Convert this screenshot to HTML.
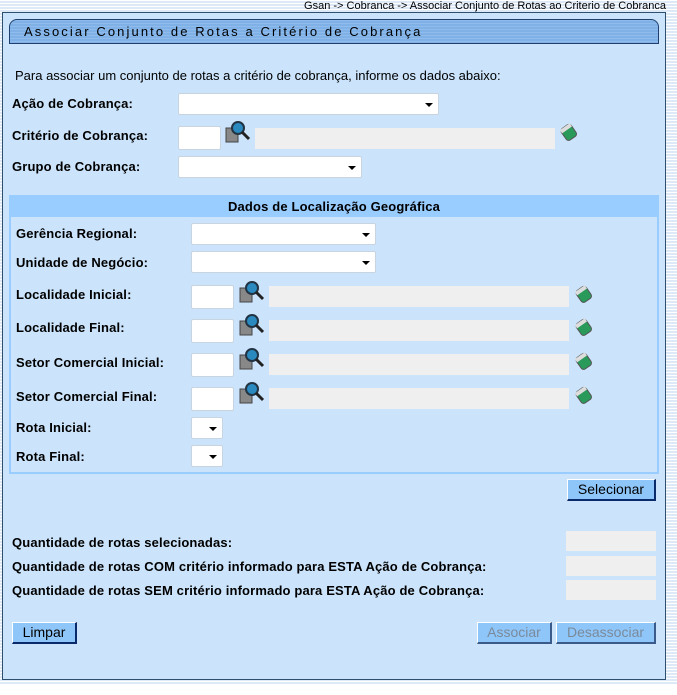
<!DOCTYPE html><html><head><meta charset="utf-8"><style>
*{margin:0;padding:0;box-sizing:border-box}
body{width:677px;height:695px;position:relative;overflow:hidden;background:#fff;font-family:"Liberation Sans",Arial,sans-serif;font-size:13px;color:#000}
.stripes{position:absolute;left:0;top:0;width:677px;height:684px;background:repeating-linear-gradient(#fff 0 1px,#dde9f7 1px 3px)}
.a{position:absolute}
.panel{position:absolute;left:2px;top:12px;width:664px;height:668px;background:#cbe4fb;border:1px solid #2f4f6f}
.title{position:absolute;left:9px;top:19px;width:650px;height:25px;border:1px solid #1f3f6f;border-radius:8px 8px 0 0;background:repeating-linear-gradient(#8fbcec 0 1px,#7fb1e6 1px 3px);font-size:13px;letter-spacing:2.1px;padding:4px 0 0 14px;color:#000}
.lb{position:absolute;font-weight:bold;font-size:13px;letter-spacing:0.15px}
.sel{position:absolute;background:#fff;border:1px solid #c8d4e0;border-radius:2px;height:22px}
.sel:after{content:"";position:absolute;right:5px;top:9px;border-left:4px solid transparent;border-right:4px solid transparent;border-top:4px solid #000}
.in{position:absolute;background:#fff;border:1px solid #c8d4e0;border-radius:2px;width:43px;height:24px}
.ro{position:absolute;background:#efefef;height:21px}
.btn{position:absolute;height:22px;background:#8fc6fa;border:1px solid #fff;border-right:2px solid #0a2a6a;border-bottom:2px solid #0a2a6a;font-size:14px;text-align:center;line-height:19px}
.dis{color:#7a8a9a;border-right:2px solid #3a5a8a;border-bottom:2px solid #3a5a8a}
</style></head><body>
<div class="stripes"></div>
<div class="a" style="right:11px;top:0;font-size:11px;line-height:12px">Gsan -&gt; Cobranca -&gt; Associar Conjunto de Rotas ao Criterio de Cobranca</div>
<div class="panel"></div>
<div class="title">Associar Conjunto de Rotas a Critério de Cobrança</div>
<div class="a" style="left:15px;top:68px">Para associar um conjunto de rotas a critério de cobrança, informe os dados abaixo:</div>

<div class="lb" style="left:12px;top:96px">Ação de Cobrança:</div>
<div class="sel" style="left:178px;top:93px;width:261px"></div>
<div class="lb" style="left:12px;top:128px">Critério de Cobrança:</div>
<div class="in" style="left:178px;top:126px"></div>
<svg class="a" style="left:225px;top:120px" width="28" height="26" viewBox="0 0 28 26"><rect x="1" y="8" width="12" height="14" fill="#888" stroke="#444"/><circle cx="13" cy="8" r="6" fill="#2a8ac0" stroke="#234" stroke-width="2"/><line x1="17" y1="12" x2="24" y2="19" stroke="#222" stroke-width="3"/></svg>
<div class="ro" style="left:255px;top:128px;width:300px"></div>
<svg class="a" style="left:558px;top:120px" width="22" height="22" viewBox="0 0 22 22"><g transform="rotate(-35 11 11)"><rect x="4" y="5" width="12" height="14" rx="3" fill="#2a9a5a" stroke="#555"/><rect x="4" y="5" width="12" height="4" fill="#ddd"/></g></svg>

<div class="lb" style="left:12px;top:159px">Grupo de Cobrança:</div>
<div class="sel" style="left:178px;top:156px;width:184px"></div>

<div class="a" style="left:9px;top:195px;width:650px;height:279px;border:2px solid #99ccff"></div>
<div class="a" style="left:11px;top:197px;width:646px;height:20px;background:#99ccff;font-weight:bold;text-align:center;line-height:20px;letter-spacing:0.15px">Dados de Localização Geográfica</div>

<div class="lb" style="left:16px;top:226px">Gerência Regional:</div>
<div class="sel" style="left:191px;top:223px;width:185px"></div>
<div class="lb" style="left:16px;top:255px">Unidade de Negócio:</div>
<div class="sel" style="left:191px;top:251px;width:185px"></div>

<div class="lb" style="left:16px;top:287px">Localidade Inicial:</div>
<div class="lb" style="left:16px;top:320px">Localidade Final:</div>
<div class="lb" style="left:16px;top:355px">Setor Comercial Inicial:</div>
<div class="lb" style="left:16px;top:389px">Setor Comercial Final:</div>

<div class="in" style="left:191px;top:285px"></div>
<div class="in" style="left:191px;top:319px"></div>
<div class="in" style="left:191px;top:353px"></div>
<div class="in" style="left:191px;top:387px"></div>
<div class="ro" style="left:269px;top:286px;width:300px"></div>
<div class="ro" style="left:269px;top:320px;width:300px"></div>
<div class="ro" style="left:269px;top:354px;width:300px"></div>
<div class="ro" style="left:269px;top:388px;width:300px"></div>
<svg class="a" style="left:239px;top:280px" width="28" height="26" viewBox="0 0 28 26"><rect x="1" y="8" width="12" height="14" fill="#888" stroke="#444"/><circle cx="13" cy="8" r="6" fill="#2a8ac0" stroke="#234" stroke-width="2"/><line x1="17" y1="12" x2="24" y2="19" stroke="#222" stroke-width="3"/></svg>
<svg class="a" style="left:239px;top:313px" width="28" height="26" viewBox="0 0 28 26"><rect x="1" y="8" width="12" height="14" fill="#888" stroke="#444"/><circle cx="13" cy="8" r="6" fill="#2a8ac0" stroke="#234" stroke-width="2"/><line x1="17" y1="12" x2="24" y2="19" stroke="#222" stroke-width="3"/></svg>
<svg class="a" style="left:239px;top:347px" width="28" height="26" viewBox="0 0 28 26"><rect x="1" y="8" width="12" height="14" fill="#888" stroke="#444"/><circle cx="13" cy="8" r="6" fill="#2a8ac0" stroke="#234" stroke-width="2"/><line x1="17" y1="12" x2="24" y2="19" stroke="#222" stroke-width="3"/></svg>
<svg class="a" style="left:239px;top:381px" width="28" height="26" viewBox="0 0 28 26"><rect x="1" y="8" width="12" height="14" fill="#888" stroke="#444"/><circle cx="13" cy="8" r="6" fill="#2a8ac0" stroke="#234" stroke-width="2"/><line x1="17" y1="12" x2="24" y2="19" stroke="#222" stroke-width="3"/></svg>
<svg class="a" style="left:573px;top:282px" width="22" height="22" viewBox="0 0 22 22"><g transform="rotate(-35 11 11)"><rect x="4" y="5" width="12" height="14" rx="3" fill="#2a9a5a" stroke="#555"/><rect x="4" y="5" width="12" height="4" fill="#ddd"/></g></svg>
<svg class="a" style="left:573px;top:315px" width="22" height="22" viewBox="0 0 22 22"><g transform="rotate(-35 11 11)"><rect x="4" y="5" width="12" height="14" rx="3" fill="#2a9a5a" stroke="#555"/><rect x="4" y="5" width="12" height="4" fill="#ddd"/></g></svg>
<svg class="a" style="left:573px;top:349px" width="22" height="22" viewBox="0 0 22 22"><g transform="rotate(-35 11 11)"><rect x="4" y="5" width="12" height="14" rx="3" fill="#2a9a5a" stroke="#555"/><rect x="4" y="5" width="12" height="4" fill="#ddd"/></g></svg>
<svg class="a" style="left:573px;top:383px" width="22" height="22" viewBox="0 0 22 22"><g transform="rotate(-35 11 11)"><rect x="4" y="5" width="12" height="14" rx="3" fill="#2a9a5a" stroke="#555"/><rect x="4" y="5" width="12" height="4" fill="#ddd"/></g></svg>

<div class="lb" style="left:16px;top:420px">Rota Inicial:</div>
<div class="sel" style="left:191px;top:417px;width:32px"></div>
<div class="lb" style="left:16px;top:449px">Rota Final:</div>
<div class="sel" style="left:191px;top:445px;width:32px"></div>

<div class="btn" style="left:567px;top:479px;width:89px">Selecionar</div>

<div class="lb" style="left:12px;top:535px">Quantidade de rotas selecionadas:</div>
<div class="lb" style="left:12px;top:559px">Quantidade de rotas COM critério informado para ESTA Ação de Cobrança:</div>
<div class="lb" style="left:12px;top:583px">Quantidade de rotas SEM critério informado para ESTA Ação de Cobrança:</div>
<div class="ro" style="left:566px;top:531px;width:90px;height:20px"></div>
<div class="ro" style="left:566px;top:556px;width:90px;height:20px"></div>
<div class="ro" style="left:566px;top:580px;width:90px;height:20px"></div>

<div class="btn" style="left:12px;top:622px;width:65px">Limpar</div>
<div class="btn dis" style="left:477px;top:622px;width:75px">Associar</div>
<div class="btn dis" style="left:556px;top:622px;width:100px">Desassociar</div>
</body></html>
